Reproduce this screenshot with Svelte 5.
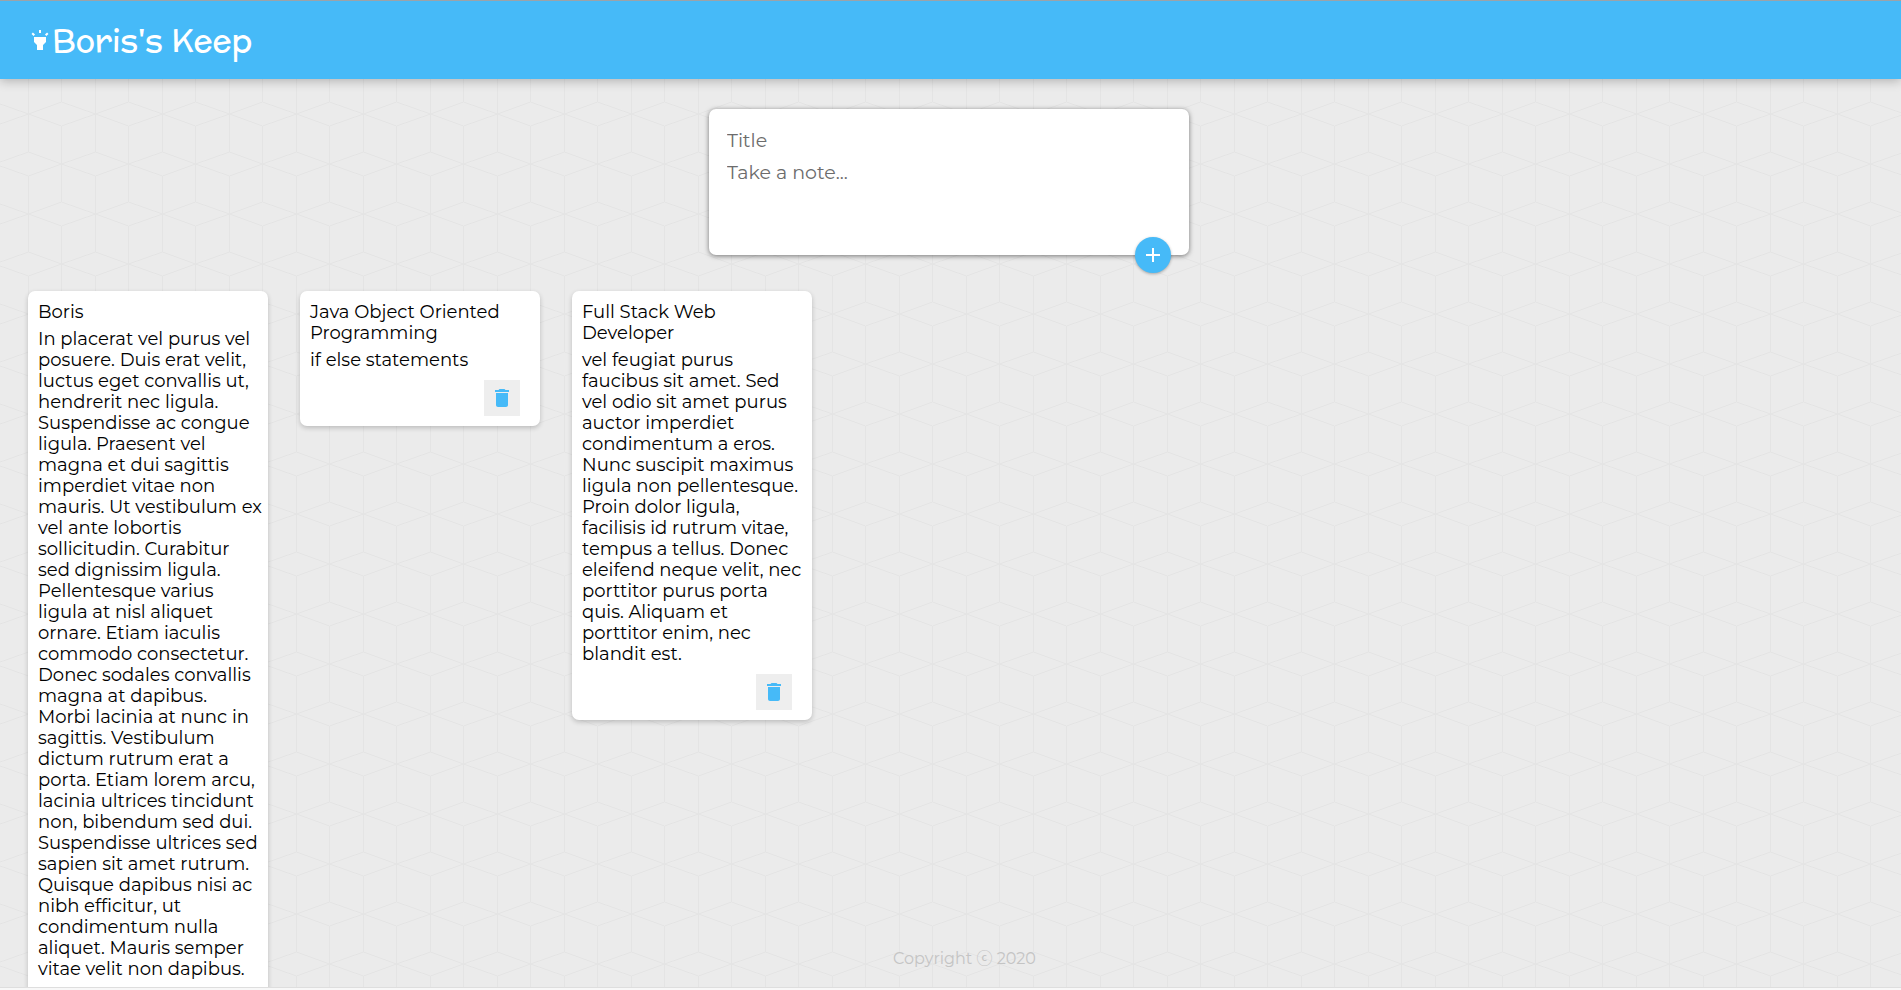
<script>
  let title = $state('');
  let content = $state('');
  let notes = $state([
    {
      id: 1,
      title: 'Boris',
      content:
        'In placerat vel purus vel\nposuere. Duis erat velit,\nluctus eget convallis ut,\nhendrerit nec ligula.\nSuspendisse ac congue\nligula. Praesent vel\nmagna et dui sagittis\nimperdiet vitae non\nmauris. Ut vestibulum ex\nvel ante lobortis\nsollicitudin. Curabitur\nsed dignissim ligula.\nPellentesque varius\nligula at nisl aliquet\nornare. Etiam iaculis\ncommodo consectetur.\nDonec sodales convallis\nmagna at dapibus.\nMorbi lacinia at nunc in\nsagittis. Vestibulum\ndictum rutrum erat a\nporta. Etiam lorem arcu,\nlacinia ultrices tincidunt\nnon, bibendum sed dui.\nSuspendisse ultrices sed\nsapien sit amet rutrum.\nQuisque dapibus nisi ac\nnibh efficitur, ut\ncondimentum nulla\naliquet. Mauris semper\nvitae velit non dapibus.'
    },
    { id: 2, title: 'Java Object Oriented\nProgramming', content: 'if else statements' },
    {
      id: 3,
      title: 'Full Stack Web\nDeveloper',
      content:
        'vel feugiat purus\nfaucibus sit amet. Sed\nvel odio sit amet purus\nauctor imperdiet\ncondimentum a eros.\nNunc suscipit maximus\nligula non pellentesque.\nProin dolor ligula,\nfacilisis id rutrum vitae,\ntempus a tellus. Donec\neleifend neque velit, nec\nporttitor purus porta\nquis. Aliquam et\nporttitor enim, nec\nblandit est.'
    }
  ]);

  function addNote(event) {
    event.preventDefault();
    if (!title && !content) return;
    notes.push({ id: Date.now(), title, content });
    title = '';
    content = '';
  }

  function removeNote(id) {
    notes = notes.filter((note) => note.id !== id);
  }
</script>

<div class="frame">
  <div class="page">
    <header>
      <svg class="icon" viewBox="0 0 24 24" aria-hidden="true">
        <path d="M6 14l3 3v5h6v-5l3-3V9H6zm5-12h2v3h-2zM3.5 5.875L4.914 4.46l2.12 2.122L5.62 7.997zm13.46.71l2.123-2.12 1.414 1.414L18.375 8z" />
      </svg>
      <h1>Boris's Keep</h1>
    </header>

    <form onsubmit={addNote}>
      <input name="title" aria-label="Title" placeholder="Title" autocomplete="off" bind:value={title} />
      <textarea name="content" aria-label="Note" rows="3" placeholder="Take a note..." bind:value={content}></textarea>
      <button class="add" aria-label="Add note">
        <svg class="icon" viewBox="0 0 24 24" aria-hidden="true">
          <path d="M19 13h-6v6h-2v-6H5v-2h6V5h2v6h6v2z" />
        </svg>
      </button>
    </form>

    <main>
      {#each notes as note (note.id)}
        <article>
          <h2>{note.title}</h2>
          <p>{note.content}</p>
          <button class="delete" aria-label="Delete note" onclick={() => removeNote(note.id)}>
            <svg class="icon" viewBox="0 0 24 24" aria-hidden="true">
              <path d="M6 19c0 1.1.9 2 2 2h8c1.1 0 2-.9 2-2V7H6v12zM19 4h-3.5l-1-1h-5l-1 1H5v2h14V4z" />
            </svg>
          </button>
        </article>
      {/each}
    </main>

    <footer>Copyright ⓒ 2020</footer>
  </div>
</div>

<style>
  :global(body) {
    margin: 0;
  }

  .frame,
  .frame * {
    box-sizing: border-box;
  }

  .frame {
    height: 100vh;
    padding-bottom: 2px;
    background: #f8f8f8;
    font-family: Montserrat, Inter, 'Noto Sans CJK SC', sans-serif;
    color: #000;
  }

  .page {
    display: flex;
    flex-direction: column;
    height: 100%;
    overflow-x: hidden;
    overflow-y: auto;
    scrollbar-width: none;
    border-top: 1px solid #9ba3a9;
    border-bottom: 1px solid #dedede;
    background-color: #ebebeb;
    background-image: url("data:image/svg+xml,%3Csvg xmlns='http://www.w3.org/2000/svg' width='67' height='100'%3E%3Cpath fill='none' stroke='%23e4e4e4' d='M.5 24V100M34.5 0V50M34.5 74V100M34.5 12L67.5 0M34.5 12L67.5 24M34.5 12L.5 0M34.5 12L.5 24M.5 62L34.5 50L67.5 62L34.5 74Z'/%3E%3C/svg%3E");
    background-position: 61px 1px;
  }

  .icon {
    display: block;
    flex: none;
    width: 24px;
    height: 24px;
    fill: currentColor;
  }

  header {
    display: flex;
    flex: none;
    align-items: center;
    height: 78px;
    padding: 0 28px;
    background: #46baf8;
    color: #fff;
    box-shadow: 0 2px 10px rgba(0, 0, 0, 0.25);
  }

  h1 {
    margin: 0;
    font-family: McLaren, Inter, sans-serif;
    font-size: 32px;
    font-weight: 400;
    line-height: 46px;
  }

  form {
    position: relative;
    flex: none;
    align-self: center;
    width: 480px;
    max-width: 90%;
    margin: 30px 3px 36px 0;
    padding: 19px 18px 17px;
    border-radius: 7px;
    background: #fff;
    box-shadow: 0 1px 5px rgba(0, 0, 0, 0.5);
  }

  input,
  textarea {
    display: block;
    width: 100%;
    margin: 0;
    padding: 0;
    border: 0;
    outline: none;
    resize: none;
    background: none;
    font-family: inherit;
    font-size: 19px;
    line-height: 26px;
  }

  input {
    height: 26px;
    margin-bottom: 6px;
  }

  input::placeholder,
  textarea::placeholder {
    color: #6c6c6c;
  }

  button {
    display: flex;
    align-items: center;
    justify-content: center;
    width: 36px;
    height: 36px;
    padding: 0;
    border: 0;
    cursor: pointer;
  }

  .add {
    position: absolute;
    right: 18px;
    bottom: -18px;
    border-radius: 50%;
    background: #46baf8;
    color: #fff;
    box-shadow: 0 1px 3px rgba(0, 0, 0, 0.3);
  }

  main {
    display: flex;
    flex: 1 1 0;
    flex-wrap: wrap;
    align-items: flex-start;
    gap: 32px;
    min-height: 0;
    padding: 0 28px;
  }

  article {
    width: 240px;
    padding: 11px 4px 10px 10px;
    border-radius: 7px;
    background: #fff;
    box-shadow: 0 2px 5px rgba(0, 0, 0, 0.2);
  }

  h2,
  p {
    margin: 0;
    font-size: 18px;
    font-weight: 400;
    line-height: 21px;
    white-space: pre-line;
  }

  h2 {
    margin-bottom: 6px;
  }

  .delete {
    margin: 9px 16px 0 auto;
    background: #eee;
    color: #46baf8;
  }

  footer {
    flex: none;
    padding: 0 0 17px 28px;
    color: #c4c4c4;
    font-size: 16px;
    line-height: 22px;
    text-align: center;
  }
</style>
